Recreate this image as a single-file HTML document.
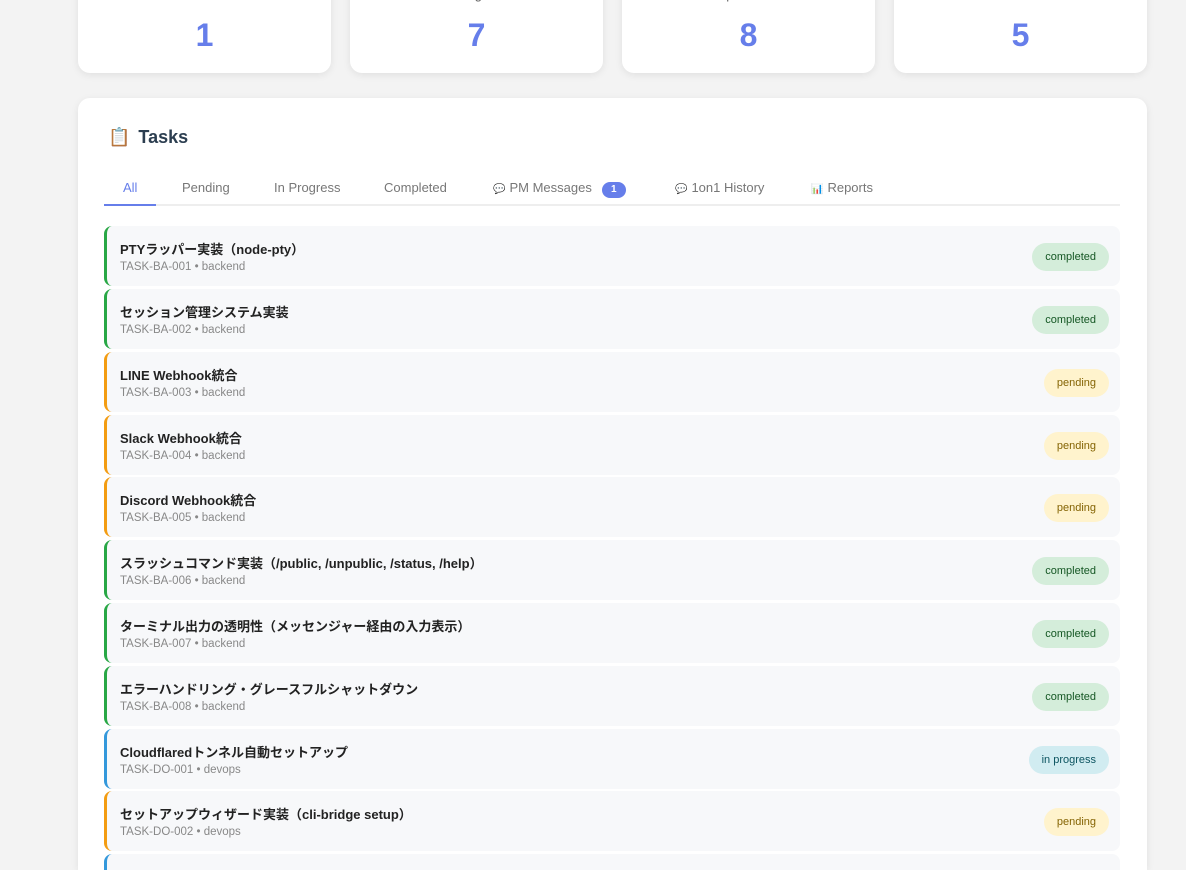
<!DOCTYPE html>
<html><head><meta charset="utf-8"><style>
*{box-sizing:border-box;margin:0;padding:0}
html,body{width:1186px;height:870px;overflow:hidden}
body{background:#f3f3f3;font-family:"Liberation Sans","Noto Sans CJK JP",sans-serif;position:relative}
.stat{position:absolute;top:-30px;height:103px;width:253px;background:#fff;border-radius:12px;box-shadow:0 2px 8px rgba(0,0,0,.08);text-align:center}
.stat .l{position:absolute;top:17px;width:100%;font-size:13px;color:#666}
.stat .n{position:absolute;top:44px;width:100%;font-size:32px;font-weight:bold;color:#667eea;line-height:42px}
.card{position:absolute;left:78px;top:98px;width:1069px;height:772px;background:#fff;border-radius:12px 12px 0 0;box-shadow:0 2px 8px rgba(0,0,0,.08)}
h2{position:absolute;left:30px;top:29px;font-size:18px;color:#2c3e50;font-weight:bold}
h2 span{margin-right:8px}
.tabs{position:absolute;left:26px;top:70px;width:1016px;height:38px;border-bottom:2px solid #eee}
.tab{position:absolute;top:12px;font-size:13px;color:#777;line-height:16px}
.tab.a{color:#667eea}
.tab i{font-style:normal;font-size:10px;margin-right:4px}
.ul{position:absolute;left:0;top:36px;width:52px;height:2px;background:#667eea}
.badge1{display:inline-block;background:#667eea;color:#fff;border-radius:9px;font-size:10px;font-weight:bold;width:24px;height:16px;line-height:16px;text-align:center;margin-left:10px}
.item{position:absolute;left:26px;width:1016px;height:60px;background:#f7f8fa;border-radius:8px;border-left:3px solid #28a745}
.item .t{position:absolute;left:13px;top:13px;font-size:13px;font-weight:bold;color:#222}
.item .s{position:absolute;left:13px;top:35px;font-size:11.5px;color:#888}
.b{position:absolute;right:11px;top:17px;height:28px;line-height:28px;border-radius:14px;font-size:11px;padding:0 13px}
.c{background:#d4edda;color:#155724}.p{background:#fff3cd;color:#856404}.g{background:#d1ecf1;color:#0c5460}
.ip{border-left-color:#3498db}.pe{border-left-color:#f39c12}
</style></head><body>
<div class="stat" style="left:78px"><div class="l">Current Wave</div><div class="n">1</div></div>
<div class="stat" style="left:350px"><div class="l">Pending Tasks</div><div class="n">7</div></div>
<div class="stat" style="left:622px"><div class="l">Completed Tasks</div><div class="n">8</div></div>
<div class="stat" style="left:894px"><div class="l">Active Sessions</div><div class="n">5</div></div>
<div class="card">
<h2><span>📋</span>Tasks</h2>
<div class="tabs">
<span class="tab a" style="left:19px">All</span>
<span class="tab" style="left:78px">Pending</span>
<span class="tab" style="left:170px">In Progress</span>
<span class="tab" style="left:280px">Completed</span>
<span class="tab" style="left:389px"><i>💬</i>PM Messages<span class="badge1">1</span></span>
<span class="tab" style="left:571px"><i>💬</i>1on1 History</span>
<span class="tab" style="left:707px"><i>📊</i>Reports</span>
<div class="ul"></div>
</div>
<div class="item" style="top:128px"><div class="t">PTYラッパー実装（node-pty）</div><div class="s">TASK-BA-001 • backend</div><span class="b c">completed</span></div>
<div class="item" style="top:191px"><div class="t">セッション管理システム実装</div><div class="s">TASK-BA-002 • backend</div><span class="b c">completed</span></div>
<div class="item pe" style="top:254px"><div class="t">LINE Webhook統合</div><div class="s">TASK-BA-003 • backend</div><span class="b p">pending</span></div>
<div class="item pe" style="top:317px"><div class="t">Slack Webhook統合</div><div class="s">TASK-BA-004 • backend</div><span class="b p">pending</span></div>
<div class="item pe" style="top:379px"><div class="t">Discord Webhook統合</div><div class="s">TASK-BA-005 • backend</div><span class="b p">pending</span></div>
<div class="item" style="top:442px"><div class="t">スラッシュコマンド実装（/public, /unpublic, /status, /help）</div><div class="s">TASK-BA-006 • backend</div><span class="b c">completed</span></div>
<div class="item" style="top:505px"><div class="t">ターミナル出力の透明性（メッセンジャー経由の入力表示）</div><div class="s">TASK-BA-007 • backend</div><span class="b c">completed</span></div>
<div class="item" style="top:568px"><div class="t">エラーハンドリング・グレースフルシャットダウン</div><div class="s">TASK-BA-008 • backend</div><span class="b c">completed</span></div>
<div class="item ip" style="top:631px"><div class="t">Cloudflaredトンネル自動セットアップ</div><div class="s">TASK-DO-001 • devops</div><span class="b g">in progress</span></div>
<div class="item pe" style="top:693px"><div class="t">セットアップウィザード実装（cli-bridge setup）</div><div class="s">TASK-DO-002 • devops</div><span class="b p">pending</span></div>
<div class="item ip" style="top:756px;height:16px;border-radius:8px 8px 0 0"></div>
</div>
</body></html>
